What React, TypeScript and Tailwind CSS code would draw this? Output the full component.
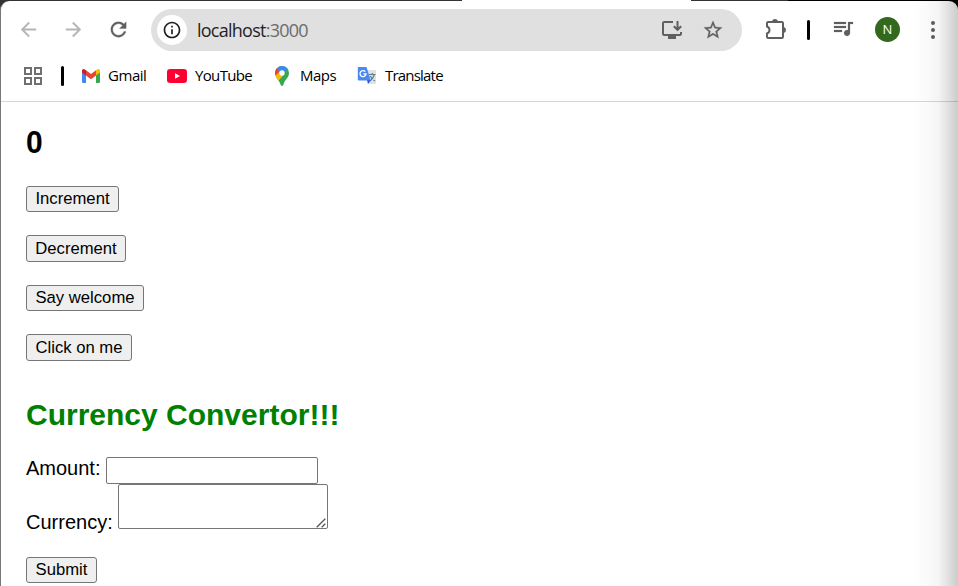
import type { ReactNode } from "react";

function Glyph({ d, size = 24, bold = 0, className = "" }: { d: string; size?: number; bold?: number; className?: string }) {
  return (
    <svg
      width={size}
      height={size}
      viewBox="0 0 24 24"
      fill="currentColor"
      stroke={bold ? "currentColor" : "none"}
      strokeWidth={bold}
      className={"shrink-0 " + className}
    >
      <path d={d} />
    </svg>
  );
}

const BACK = "M20 11H7.83l5.59-5.59L12 4l-8 8 8 8 1.41-1.41L7.83 13H20v-2z";
const FORWARD = "M12 4l-1.41 1.41L16.17 11H4v2h12.17l-5.58 5.59L12 20l8-8z";
const RELOAD =
  "M17.65 6.35C16.2 4.9 14.21 4 12 4c-4.42 0-7.99 3.58-7.99 8s3.57 8 7.99 8c3.73 0 6.84-2.55 7.73-6h-2.08c-.82 2.33-3.04 4-5.65 4-3.31 0-6-2.69-6-6s2.69-6 6-6c1.66 0 3.14.69 4.22 1.78L13 11h7V4l-2.35 2.35z";
const INFO =
  "M11 7h2v2h-2zm0 4h2v6h-2zm1-9C6.48 2 2 6.48 2 12s4.48 10 10 10 10-4.48 10-10S17.52 2 12 2zm0 18c-4.41 0-8-3.59-8-8s3.59-8 8-8 8 3.59 8 8-3.59 8-8 8z";
const STAR =
  "M22 9.24l-7.19-.62L12 2 9.19 8.63 2 9.24l5.46 4.73L5.82 21 12 17.27 18.18 21l-1.63-7.03L22 9.24zM12 15.4l-3.76 2.27 1-4.28-3.32-2.88 4.38-.38L12 6.1l1.71 4.04 4.38.38-3.32 2.88 1 4.28L12 15.4z";
const QUEUE =
  "M15 6H3v2h12V6zm0 4H3v2h12v-2zM3 16h8v-2H3v2zM17 6v8.18c-.31-.11-.65-.18-1-.18-1.66 0-3 1.34-3 3s1.34 3 3 3 3-1.34 3-3V8h3V6h-5z";

function InstallIcon() {
  return (
    <svg width="22" height="20" viewBox="0 0 22 20" fill="none" stroke="currentColor" strokeWidth="2" className="shrink-0">
      <path d="M12 2H3.200Q2 2 2 3.200v10.600Q2 15 3.200 15h15.600q1.200 0 1.200-1.200V12" />
      <path d="M16.500 1v8M12.800 6.200l3.700 3.600 3.700-3.600" />
      <path d="M7 15h8v4H7z" fill="currentColor" stroke="none" />
    </svg>
  );
}

function PuzzleIcon() {
  return (
    <svg width="22" height="22" viewBox="0 0 22 22" fill="none" className="shrink-0">
      <path
        d="M3.200 4H16.800Q18 4 18 5.200V18.800Q18 20 16.800 20H3.200Q2 20 2 18.800V15.500A3.700 3.700 0 0 0 2 8.500V5.200Q2 4 3.200 4Z"
        stroke="currentColor"
        strokeWidth="2"
      />
      <path d="M7.300 4a2.700 2.700 0 0 1 5.400 0zM18 9.300a2.700 2.700 0 0 1 0 5.400z" fill="currentColor" stroke="currentColor" strokeWidth="0.600" />
    </svg>
  );
}

function GmailIcon() {
  return (
    <svg width="18" height="14" viewBox="0 0 18 14" className="shrink-0">
      <path d="M0 2.500 4 5.300V14H1.200Q0 14 0 12.800z" fill="#4285f4" />
      <path d="M18 2.500 14 5.300V14h2.800q1.200 0 1.200-1.200z" fill="#34a853" />
      <path d="M14 1.200 15.300.4C16.600-.4 18 .4 18 2v1.500L14 6.500z" fill="#fbbc04" />
      <path d="M4 1.200 9 5l5-3.800v5.300l-5 3.800-5-3.800z" fill="#ea4335" />
      <path d="M4 1.200 2.700.4C1.400-.4 0 .4 0 2v1.500l4 3z" fill="#c5221f" />
    </svg>
  );
}

function YouTubeIcon() {
  return (
    <svg width="20" height="14" viewBox="0 0 20 14" className="shrink-0">
      <rect width="20" height="14" rx="3.200" fill="#ff0033" />
      <path d="M8 4.200v5.600l5-2.800z" fill="#fff" />
    </svg>
  );
}

function MapsIcon() {
  return (
    <svg width="14" height="20" viewBox="0 0 14 20" className="shrink-0">
      <clipPath id="pin">
        <path d="M7 0a7 7 0 0 1 7 7c0 5-4.400 6.500-5.500 11.600Q8.200 20 7 20t-1.500-1.400C4.800 14.500 0 12 0 7a7 7 0 0 1 7-7z" />
      </clipPath>
      <g clipPath="url(#pin)">
        <path d="M0 0h14v20H0z" fill="#34a853" />
        <path d="M1 1 7 7l-4.500 5L0 8V2z" fill="#ea4335" />
        <path d="M1.500 2.500 4 0h10v2L7 8z" fill="#4285f4" />
        <path d="M0 10 4.800 5.500 7 9.500 9.500 8 2.800 15.500z" fill="#fbbc04" />
      </g>
      <circle cx="7" cy="7" r="2.700" fill="#fff" />
    </svg>
  );
}

function TranslateIcon() {
  return (
    <svg width="20" height="19" viewBox="0 0 20 19" className="shrink-0">
      <path d="M7 4h11q1 0 1 1v12q0 1-1 1h-6z" fill="#dfe1e5" />
      <path d="M12 8.500h6.500M15.300 7v1.500M17.300 8.500c-.7 2.500-2 5-4.300 6.500M13.300 10c1 2.300 2.600 4 4.700 5" stroke="#607d8b" strokeWidth="1.200" fill="none" />
      <path d="M10 14h4l-3 4z" fill="#3547c4" />
      <path d="M1 1h8.500L13.700 14.500H2q-1.200 0-1.200-1.200V2z" fill="#4889f4" />
      <path d="M8.300 5.700A3 3 0 1 0 9 8H6.500" stroke="#fff" strokeWidth="1.300" fill="none" />
    </svg>
  );
}

function Bookmark({ icon, label, gap, text }: { icon: ReactNode; label: string; gap: string; text: string }) {
  return (
    <div className={"flex items-center " + gap}>
      {icon}
      <span className={"whitespace-nowrap " + text}>{label}</span>
    </div>
  );
}

function Toolbar() {
  return (
    <div className="flex h-[58px] shrink-0 items-center pl-[16px] text-[#5f5f5f]">
      <Glyph d={BACK} size={23} className="mb-px text-[#b5b5b5]" />
      <Glyph d={FORWARD} size={23} className="mb-px ml-[22px] text-[#b5b5b5]" />
      <Glyph d={RELOAD} size={23} bold={0.3} className="mb-px ml-[22px]" />
      <div className="ml-[21px] flex h-[42px] w-[591px] shrink-0 items-center rounded-full bg-[#e0e0e0] pl-[6px]">
        <div className="flex size-[30px] items-center justify-center rounded-full bg-white text-[#1f1f1f]">
          <Glyph d={INFO} size={20} />
        </div>
        <div className="ml-[10px] w-[464px] font-['Open_Sans',sans-serif] text-[18px] tracking-[-0.75px] text-[#1f1f1f]">
          localhost<span className="text-[#6b6b6b]">:3000</span>
        </div>
        <InstallIcon />
        <Glyph d={STAR} size={22} bold={0.3} className="ml-[19px]" />
      </div>
      <div className="ml-[23px] pb-[2px]"><PuzzleIcon /></div>
      <div className="ml-[20px] h-5 w-[3px] rounded-full bg-black" />
      <Glyph d={QUEUE} bold={0.2} className="mb-1 ml-[21px]" />
      <div className="mb-px ml-[20px] flex size-[25px] items-center justify-center rounded-full bg-[#33691e] font-['Open_Sans',sans-serif] text-[13px] text-white">
        N
      </div>
      <div className="mb-px ml-[30.5px] flex flex-col gap-[3px]">
        <i className="size-1 rounded-full bg-current" />
        <i className="size-1 rounded-full bg-current" />
        <i className="size-1 rounded-full bg-current" />
      </div>
    </div>
  );
}

function BookmarkBar() {
  return (
    <div className="flex h-[43px] shrink-0 items-start border-b border-[#d6d6d6] pl-[23px] font-['Open_Sans',sans-serif] text-[15px] text-black">
      <div className="flex h-[33px] items-center">
        <div className="grid grid-cols-2 gap-[2px] pt-px">
          <i className="size-2 border-2 border-[#707070]" />
          <i className="size-2 border-2 border-[#707070]" />
          <i className="size-2 border-2 border-[#707070]" />
          <i className="size-2 border-2 border-[#707070]" />
        </div>
        <div className="ml-[19px] h-5 w-[3px] rounded-full bg-black" />
        <div className="ml-[18px] w-[85px]">
          <Bookmark icon={<GmailIcon />} label="Gmail" gap="gap-[8px]" text="tracking-[-0.45px]" />
        </div>
        <div className="w-[108px]">
          <Bookmark icon={<YouTubeIcon />} label="YouTube" gap="gap-[8px]" text="tracking-[-0.65px]" />
        </div>
        <div className="w-[82px]">
          <Bookmark icon={<MapsIcon />} label="Maps" gap="gap-[11px]" text="tracking-[-0.5px]" />
        </div>
        <Bookmark icon={<TranslateIcon />} label="Translate" gap="gap-[8px]" text="tracking-[-0.8px]" />
      </div>
    </div>
  );
}

function PushButton({ children, className }: { children: ReactNode; className: string }) {
  return (
    <button
      className={
        "block rounded-[3px] border border-[#767676] bg-[#efefef] text-center text-[16.67px] leading-[23px] whitespace-nowrap text-black " +
        className
      }
    >
      {children}
    </button>
  );
}

function Page() {
  return (
    <main className="flex flex-1 flex-col items-start pl-[25px] text-[20px] text-black">
      <h2 className="mt-[23px] h-9 text-[30px] leading-9 font-bold"><span className="inline-block scale-y-105">0</span></h2>
      <PushButton className="mt-[25px] h-[26px] w-[93px] pb-px">Increment</PushButton>
      <PushButton className="mt-[23px] h-[27px] w-[100px]">Decrement</PushButton>
      <PushButton className="mt-[23px] h-[26px] w-[118px] pb-px">Say welcome</PushButton>
      <PushButton className="mt-[23px] h-[27px] w-[106px]">Click on me</PushButton>
      <h2 className="mt-[36px] h-9 text-[30px] leading-9 font-bold whitespace-nowrap text-[#008000]">Currency Convertor!!!</h2>
      <div className="mt-[24px] flex h-[27px] items-start">
        <label className="w-[80px] leading-[22px]">Amount:</label>
        <input className="h-[27px] w-[212px] rounded-[2px] border border-[#767676] bg-white" />
      </div>
      <div className="flex h-[45px] items-end">
        <label className="w-[92px] translate-y-[4px] leading-[22px]">Currency:</label>
        <div className="relative">
          <textarea className="block h-[45px] w-[210px] resize-none rounded-[2px] border border-[#767676] bg-white" />
          <svg width="10" height="10" viewBox="0 0 10 10" stroke="#555" strokeWidth="1.300" className="pointer-events-none absolute right-[2px] bottom-[1px]">
            <path d="M.7 9.300 9.300.7M5.700 9.300 9.300 5.700" />
          </svg>
        </div>
      </div>
      <PushButton className="mt-[28px] h-[26px] w-[71px] pb-px">Submit</PushButton>
    </main>
  );
}

export default function App() {
  return (
    <div className="relative h-[586px] w-[958px] overflow-hidden bg-[#333] pt-px font-['Liberation_Sans',Arial,sans-serif]">
      <div className="absolute top-0 left-[788px] h-4 w-[170px] bg-black" />
      <div className="absolute top-0 left-[462px] h-px w-[229px] bg-white" />
      <div className="relative flex h-[585px] flex-col overflow-hidden rounded-t-[9px] border-l border-[#777] bg-white">
        <Toolbar />
        <BookmarkBar />
        <Page />
        <div className="pointer-events-none absolute inset-y-0 right-0 w-[44px] bg-linear-to-r from-black/0 via-black/4 via-55% to-black/20" />
      </div>
    </div>
  );
}
